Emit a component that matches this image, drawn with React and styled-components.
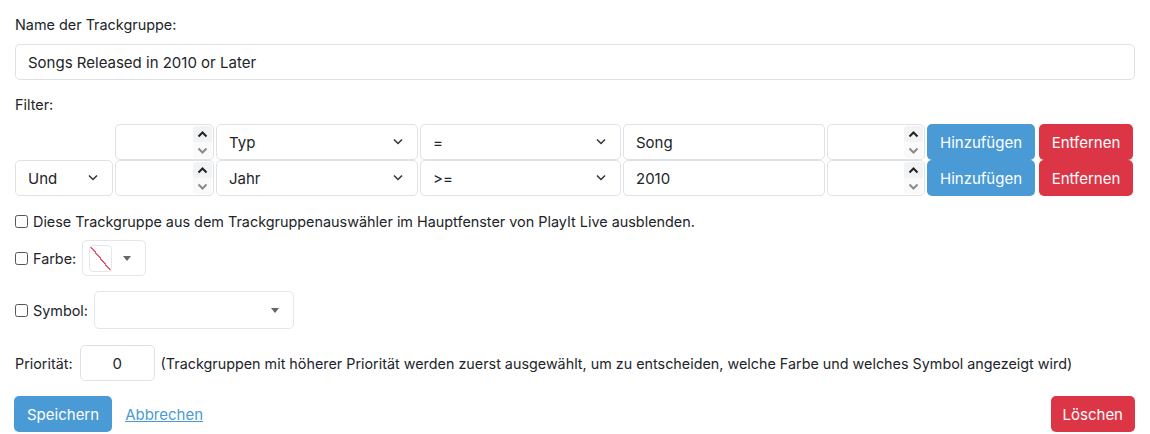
import React from "react";
import styled, { createGlobalStyle } from "styled-components";

const GlobalStyle = createGlobalStyle`
  body {
    margin: 0;
    background: #fff;
    color: #212529;
    font-family: Inter, "Noto Sans", sans-serif;
    font-size: 14.4px;
    line-height: 21px;
  }
  * { box-sizing: border-box; }
`;

const Page = styled.div`
  padding: 14px 15px 0 15px;
`;

const Label = styled.div`
  margin-bottom: ${(p) => p.$gap || 9}px;
`;

const TextInput = styled.input`
  display: block;
  width: 100%;
  height: 36px;
  padding: 0 12px;
  font-family: inherit;
  font-size: 15px;
  color: #212529;
  border: 1px solid #dee2e6;
  border-radius: 5px;
  outline: none;
  background: #fff;
  text-align: ${(p) => (p.$center ? "center" : "left")};
  &::-webkit-inner-spin-button,
  &::-webkit-outer-spin-button {
    -webkit-appearance: none;
    margin: 0;
  }
`;

const NameInput = styled(TextInput)`
  margin-bottom: 14px;
`;

const FilterGrid = styled.div`
  display: grid;
  grid-template-columns: 98px 99px 202px 201px 202px 98px 108px 96px;
  grid-auto-rows: 35px;
  column-gap: 2px;
  row-gap: 1px;
  margin-bottom: 16px;
`;

const Cell = styled.div`
  position: relative;
  height: 36px;
`;

const SelectBox = styled.div`
  position: relative;
  height: 36px;
  border: 1px solid #dee2e6;
  border-radius: 5px;
  padding: 0 12px;
  display: flex;
  align-items: center;
  font-size: 15px;
  background: #fff;
`;

const Chevron = styled.svg`
  position: absolute;
  right: 14px;
  top: 50%;
  margin-top: -4px;
`;

const Spinner = styled.div`
  position: absolute;
  right: 2px;
  top: 2px;
  bottom: 2px;
  width: 19px;
  display: flex;
  flex-direction: column;
  border-radius: 3px;
  overflow: hidden;
`;

const SpinHalf = styled.div`
  flex: 1;
  display: flex;
  align-items: center;
  justify-content: center;
  background: ${(p) => (p.$up ? "#f1f3f5" : "#fafafa")};
`;

const Button = styled.button`
  height: 36px;
  padding: 0 ${(p) => p.$pad || 12}px;
  border: none;
  border-radius: 5px;
  font-family: inherit;
  font-size: 15px;
  color: #fff;
  background: ${(p) => (p.$danger ? "#dc3545" : "#4a9ad5")};
  white-space: nowrap;
  cursor: pointer;
`;

const RemoveButton = styled(Button)`
  margin-left: 2px;
  width: 94px;
  padding: 0;
`;

const AddButton = styled(Button)`
  width: 108px;
  padding: 0;
`;

const CheckRow = styled.label`
  display: flex;
  align-items: center;
  gap: 5px;
  margin-bottom: ${(p) => p.$gap || 8}px;
`;

const Check = styled.span`
  width: 13px;
  height: 13px;
  border: 1px solid #555;
  border-radius: 2.5px;
  background: #fff;
  flex-shrink: 0;
`;

const Picker = styled.div`
  width: ${(p) => p.$w}px;
  height: ${(p) => p.$h}px;
  margin-left: 1px;
  border: 1px solid #e3e6ea;
  border-radius: 5px;
  display: flex;
  align-items: center;
  justify-content: ${(p) => (p.$swatch ? "space-between" : "flex-end")};
  padding: 0 14px 0 6px;
`;

const Swatch = styled.div`
  width: 23px;
  height: 27px;
  border: 1px solid #e6e6e6;
  border-radius: 4px;
  background: linear-gradient(
    to bottom left,
    transparent calc(50% - 0.7px),
    #e05a6b calc(50% - 0.7px),
    #e05a6b calc(50% + 0.7px),
    transparent calc(50% + 0.7px)
  );
`;

const Caret = styled.span`
  width: 0;
  height: 0;
  border-left: 4px solid transparent;
  border-right: 4px solid transparent;
  border-top: 5px solid #666;
`;

const PriorityRow = styled.div`
  display: flex;
  align-items: center;
  gap: 6px;
  margin-bottom: 15px;
  font-size: 14.35px;
`;

const PriorityInput = styled(TextInput)`
  width: 75px;
  margin-left: 1px;
  flex-shrink: 0;
`;

const Actions = styled.div`
  display: flex;
  align-items: center;
`;

const CancelLink = styled.a`
  margin-left: 13px;
  color: #4a9ad5;
  font-size: 15px;
  text-decoration: underline;
  cursor: pointer;
`;

const Spacer = styled.div`
  flex: 1;
`;

const ChevronIcon = () => (
  <Chevron width="10" height="7" viewBox="0 0 10 7">
    <path d="M1 1.5l4 4 4-4" fill="none" stroke="#333" strokeWidth="1.5" />
  </Chevron>
);

const SpinIcon = ({ up }) => (
  <svg width="11" height="7" viewBox="0 0 11 7">
    <path
      d={up ? "M1.5 5.5l4-4 4 4" : "M1.5 1.5l4 4 4-4"}
      fill="none"
      stroke={up ? "#222" : "#8a8a8a"}
      strokeWidth="2"
    />
  </svg>
);

const NumberCell = () => (
  <Cell>
    <TextInput type="number" />
    <Spinner>
      <SpinHalf $up>
        <SpinIcon up />
      </SpinHalf>
      <SpinHalf>
        <SpinIcon />
      </SpinHalf>
    </Spinner>
  </Cell>
);

const SelectCell = ({ value }) => (
  <SelectBox>
    {value}
    <ChevronIcon />
  </SelectBox>
);

const filters = [
  { join: null, field: "Typ", op: "=", value: "Song" },
  { join: "Und", field: "Jahr", op: ">=", value: "2010" },
];

export default function App() {
  return (
    <Page>
      <GlobalStyle />
      <Label>Name der Trackgruppe:</Label>
      <NameInput defaultValue="Songs Released in 2010 or Later" />

      <Label $gap={9}>Filter:</Label>
      <FilterGrid>
        {filters.map((f, i) => (
          <React.Fragment key={i}>
            {f.join ? <SelectCell value={f.join} /> : <div />}
            <NumberCell />
            <SelectCell value={f.field} />
            <SelectCell value={f.op} />
            <Cell>
              <TextInput defaultValue={f.value} />
            </Cell>
            <NumberCell />
            <AddButton>Hinzufügen</AddButton>
            <RemoveButton $danger>Entfernen</RemoveButton>
          </React.Fragment>
        ))}
      </FilterGrid>

      <CheckRow $gap={8}>
        <Check />
        Diese Trackgruppe aus dem Trackgruppenauswähler im Hauptfenster von
        PlayIt Live ausblenden.
      </CheckRow>
      <CheckRow $gap={15}>
        <Check />
        Farbe:
        <Picker $w={64} $h={36} $swatch>
          <Swatch />
          <Caret />
        </Picker>
      </CheckRow>
      <CheckRow $gap={16}>
        <Check />
        Symbol:
        <Picker $w={200} $h={38}>
          <Caret />
        </Picker>
      </CheckRow>

      <PriorityRow>
        Priorität:
        <PriorityInput defaultValue="0" $center />
        (Trackgruppen mit höherer Priorität werden zuerst ausgewählt, um zu
        entscheiden, welche Farbe und welches Symbol angezeigt wird)
      </PriorityRow>

      <Actions>
        <Button $pad={13} style={{ marginLeft: -1 }}>
          Speichern
        </Button>
        <CancelLink>Abbrechen</CancelLink>
        <Spacer />
        <Button $danger $pad={12}>
          Löschen
        </Button>
      </Actions>
    </Page>
  );
}
